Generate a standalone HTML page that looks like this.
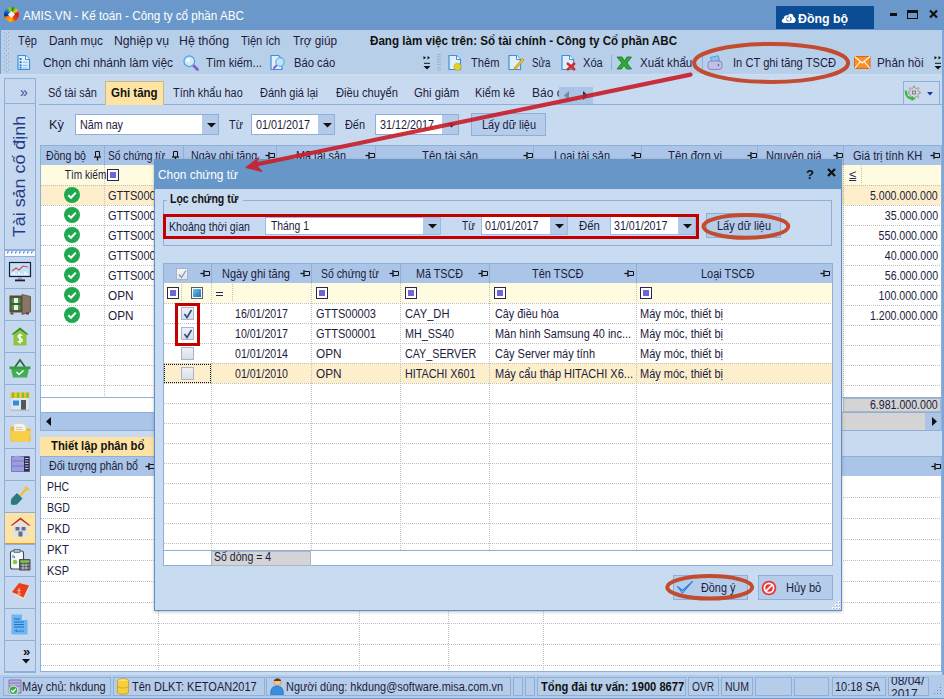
<!DOCTYPE html>
<html><head><meta charset="utf-8">
<style>
*{margin:0;padding:0;box-sizing:border-box}
html,body{width:944px;height:699px;overflow:hidden;background:#c8daf0}
body{position:relative;font-family:"Liberation Sans",sans-serif;font-size:12px;color:#1c1c3c}
.a{position:absolute}
.t{position:absolute;white-space:nowrap}
svg{position:absolute;overflow:visible}
</style></head><body>
<div class="a" style="left:0px;top:0px;width:944px;height:30px;background:#6a98ca;"></div>
<div class="a" style="left:3.5px;top:7.3px;width:15px;height:15px;border-radius:50%;background:conic-gradient(from 10deg,#1f8a1f 0deg,#d8e020 40deg,#e81010 70deg,#e83a10 130deg,#ffb020 175deg,#ff8a10 215deg,#f07010 235deg,#002a90 250deg,#1a7ad8 300deg,#a8d818 335deg,#1f8a1f 360deg)"></div>
<div class="a" style="left:8.5px;top:12.3px;width:5px;height:5px;background:#f4f4f8;transform:rotate(45deg)"></div>
<div class="t" style="transform:scaleX(0.9745);transform-origin:left;top:9.84px;font-size:12px;line-height:12px;left:23px;color:#fff;">AMIS.VN - Kế toán - Công ty cổ phần ABC</div>
<div class="a" style="left:776px;top:6px;width:98px;height:23px;background:#0b4c95;"></div>
<svg style="left:781px;top:13px" width="15" height="10" viewBox="0 0 15 10"><path d="M3 10 C0.2 10 0 6.2 2.6 5.8 C2.6 3 5 1.5 7.2 2.4 C8.2 -0.2 12.6 0.3 12.4 3.8 C15.3 4.4 15.5 10 12.2 10 Z" fill="#fff"/><circle cx="7.8" cy="6" r="2.3" fill="none" stroke="#0b4c95" stroke-width="1" stroke-dasharray="2.4 1.2"/></svg>
<div class="t" style="transform:scaleX(0.9864);transform-origin:left;top:12.72px;font-size:12.5px;line-height:12.5px;left:798px;font-weight:bold;color:#fff;">Đồng bộ</div>
<div class="a" style="left:890px;top:13px;width:7px;height:3px;background:#111;"></div>
<div class="a" style="left:907px;top:10px;width:11px;height:9px;border:1px solid #111;border-top-width:3px;"></div>
<svg style="left:929px;top:10px" width="9" height="8" viewBox="0 0 9 8"><path d="M1 0.5 L8 7.5 M8 0.5 L1 7.5" stroke="#111" stroke-width="2.2"/></svg>
<div class="a" style="left:0px;top:30px;width:944px;height:44px;background:#b8cfea;"></div>
<div class="a" style="left:0px;top:29px;width:1px;height:646px;background:#6f9bcd;"></div>
<svg style="left:4px;top:32px" width="5" height="19" fill="#a0a8b8"><rect x="0" y="0" width="1" height="1"/><rect x="4" y="0" width="1" height="1"/><rect x="2" y="2" width="1" height="1"/><rect x="0" y="4" width="1" height="1"/><rect x="4" y="4" width="1" height="1"/><rect x="2" y="6" width="1" height="1"/><rect x="0" y="8" width="1" height="1"/><rect x="4" y="8" width="1" height="1"/><rect x="2" y="10" width="1" height="1"/><rect x="0" y="12" width="1" height="1"/><rect x="4" y="12" width="1" height="1"/><rect x="2" y="14" width="1" height="1"/><rect x="0" y="16" width="1" height="1"/><rect x="4" y="16" width="1" height="1"/><rect x="2" y="18" width="1" height="1"/></svg>
<svg style="left:4px;top:53px" width="5" height="19" fill="#a0a8b8"><rect x="0" y="0" width="1" height="1"/><rect x="4" y="0" width="1" height="1"/><rect x="2" y="2" width="1" height="1"/><rect x="0" y="4" width="1" height="1"/><rect x="4" y="4" width="1" height="1"/><rect x="2" y="6" width="1" height="1"/><rect x="0" y="8" width="1" height="1"/><rect x="4" y="8" width="1" height="1"/><rect x="2" y="10" width="1" height="1"/><rect x="0" y="12" width="1" height="1"/><rect x="4" y="12" width="1" height="1"/><rect x="2" y="14" width="1" height="1"/><rect x="0" y="16" width="1" height="1"/><rect x="4" y="16" width="1" height="1"/><rect x="2" y="18" width="1" height="1"/></svg>
<div class="t" style="transform:scaleX(0.9184);transform-origin:left;top:35.14px;font-size:12px;line-height:12px;left:18px;">Tệp</div>
<div class="t" style="transform:scaleX(0.9871);transform-origin:left;top:35.14px;font-size:12px;line-height:12px;left:49px;">Danh mục</div>
<div class="t" style="transform:scaleX(1.0176);transform-origin:left;top:35.14px;font-size:12px;line-height:12px;left:114px;">Nghiệp vụ</div>
<div class="t" style="transform:scaleX(1.0266);transform-origin:left;top:35.14px;font-size:12px;line-height:12px;left:179px;">Hệ thống</div>
<div class="t" style="transform:scaleX(0.9302);transform-origin:left;top:35.14px;font-size:12px;line-height:12px;left:240.7px;">Tiện ích</div>
<div class="t" style="transform:scaleX(0.9826);transform-origin:left;top:35.14px;font-size:12px;line-height:12px;left:293px;">Trợ giúp</div>
<div class="t" style="transform:scaleX(0.9667);transform-origin:left;top:35.14px;font-size:12px;line-height:12px;left:369.8px;font-weight:bold;color:#111;">Đang làm việc trên: Sổ tài chính - Công ty Cổ phần ABC</div>
<div class="t" style="transform:scaleX(0.9892);transform-origin:left;top:57.24px;font-size:12px;line-height:12px;left:42.5px;">Chọn chi nhánh làm việc</div>
<div class="t" style="transform:scaleX(0.9437);transform-origin:left;top:57.24px;font-size:12px;line-height:12px;left:206px;">Tìm kiếm...</div>
<div class="t" style="transform:scaleX(0.9354);transform-origin:left;top:57.24px;font-size:12px;line-height:12px;left:294.3px;">Báo cáo</div>
<div class="t" style="transform:scaleX(0.9255);transform-origin:left;top:57.24px;font-size:12px;line-height:12px;left:470.8px;">Thêm</div>
<div class="t" style="transform:scaleX(0.8055);transform-origin:left;top:57.24px;font-size:12px;line-height:12px;left:531.7px;">Sửa</div>
<div class="t" style="transform:scaleX(0.9270);transform-origin:left;top:57.24px;font-size:12px;line-height:12px;left:582.7px;">Xóa</div>
<div class="t" style="transform:scaleX(0.9677);transform-origin:left;top:57.24px;font-size:12px;line-height:12px;left:639.7px;">Xuất khẩu</div>
<div class="t" style="transform:scaleX(0.9283);transform-origin:left;top:57.24px;font-size:12px;line-height:12px;left:733px;">In CT ghi tăng TSCĐ</div>
<div class="t" style="transform:scaleX(0.9815);transform-origin:left;top:57.24px;font-size:12px;line-height:12px;left:877px;">Phản hồi</div>
<div class="a" style="left:0px;top:74px;width:944px;height:602px;background:#c8daf0;"></div>
<div class="a" style="left:0px;top:74px;width:944px;height:1px;background:#cfdef2;"></div>
<div class="a" style="left:4px;top:78px;width:32px;height:594px;background:#c6d8ef;border:1px solid #8eb0d8;"></div>
<div class="a" style="left:4px;top:103px;width:32px;height:1px;background:#8eb0d8;"></div>
<div class="t" style="left:20px;top:85px;font-size:14px;line-height:14px;color:#2c4f8c">»</div>
<div class="a" style="left:4px;top:249px;width:32px;height:1px;background:#8eb0d8;"></div>
<div class="a" style="left:5px;top:249px;width:30px;height:2px;background:#8eb0d8;"></div>
<svg style="left:5px;top:251px" width="30" height="5"><rect width="30" height="5" fill="#f6f9fd"/><path d="M2 0.5 H4.5 L2 3Z" fill="#5f92d6"/><path d="M6 0.5 H8.5 L6 3Z" fill="#5f92d6"/><path d="M10 0.5 H12.5 L10 3Z" fill="#5f92d6"/><path d="M14 0.5 H16.5 L14 3Z" fill="#5f92d6"/><path d="M18 0.5 H20.5 L18 3Z" fill="#5f92d6"/><path d="M22 0.5 H24.5 L22 3Z" fill="#5f92d6"/><path d="M26 0.5 H28.5 L26 3Z" fill="#5f92d6"/></svg>
<div class="a" style="left:4px;top:256px;width:32px;height:1px;background:#8eb0d8;"></div>
<div class="a" style="left:4px;top:288px;width:32px;height:1px;background:#8eb0d8;"></div>
<div class="a" style="left:4px;top:320px;width:32px;height:1px;background:#8eb0d8;"></div>
<div class="a" style="left:4px;top:352px;width:32px;height:1px;background:#8eb0d8;"></div>
<div class="a" style="left:4px;top:384px;width:32px;height:1px;background:#8eb0d8;"></div>
<div class="a" style="left:4px;top:416px;width:32px;height:1px;background:#8eb0d8;"></div>
<div class="a" style="left:4px;top:448px;width:32px;height:1px;background:#8eb0d8;"></div>
<div class="a" style="left:4px;top:480px;width:32px;height:1px;background:#8eb0d8;"></div>
<div class="a" style="left:4px;top:512px;width:32px;height:1px;background:#8eb0d8;"></div>
<div class="a" style="left:4px;top:544px;width:32px;height:1px;background:#8eb0d8;"></div>
<div class="a" style="left:4px;top:576px;width:32px;height:1px;background:#8eb0d8;"></div>
<div class="a" style="left:4px;top:608px;width:32px;height:1px;background:#8eb0d8;"></div>
<div class="a" style="left:4px;top:640px;width:32px;height:1px;background:#8eb0d8;"></div>
<div class="a" style="left:4px;top:672px;width:32px;height:1px;background:#8eb0d8;"></div>
<div class="a" style="left:5px;top:513px;width:30px;height:31px;background:#fde4a4;"></div>
<div class="t" style="left:-38.1px;top:167.75px;width:115.4px;height:17px;font-size:17px;line-height:17px;color:#1f3d85;text-align:center;transform:rotate(-90deg) scaleX(1.053);transform-origin:center">Tài sản cố định</div>
<div class="a" style="left:39px;top:104px;width:905px;height:1px;background:#8eb0d8;"></div>
<div class="a" style="left:105px;top:81px;width:59px;height:24px;background:#fde4a4;border:1px solid #c9b98a;border-bottom:none;"></div>
<div class="t" style="transform:scaleX(0.9180);transform-origin:left;top:86.54px;font-size:12px;line-height:12px;left:48px;">Sổ tài sản</div>
<div class="t" style="transform:scaleX(0.9574);transform-origin:left;top:86.54px;font-size:12px;line-height:12px;left:111.4px;font-weight:bold;color:#111;">Ghi tăng</div>
<div class="t" style="transform:scaleX(0.9083);transform-origin:left;top:86.54px;font-size:12px;line-height:12px;left:173.2px;">Tính khẩu hao</div>
<div class="t" style="transform:scaleX(0.9152);transform-origin:left;top:86.54px;font-size:12px;line-height:12px;left:260.2px;">Đánh giá lại</div>
<div class="t" style="transform:scaleX(0.9278);transform-origin:left;top:86.54px;font-size:12px;line-height:12px;left:335.9px;">Điều chuyển</div>
<div class="t" style="transform:scaleX(0.9411);transform-origin:left;top:86.54px;font-size:12px;line-height:12px;left:413.7px;">Ghi giảm</div>
<div class="t" style="transform:scaleX(0.9179);transform-origin:left;top:86.54px;font-size:12px;line-height:12px;left:475px;">Kiểm kê</div>
<div class="a" style="left:532px;top:86px;width:28px;height:14px;overflow:hidden"><div class="t" style="left:0;top:0.5px;font-size:12px;line-height:12px;">Báo cáo</div></div>
<div class="a" style="left:559px;top:87px;width:34px;height:17px;background:#a9c4e4;"></div>
<svg style="left:564px;top:91px" width="25" height="9"><path d="M5 0 L0 4.5 L5 9Z" fill="#7a8797"/><path d="M19 0 L24 4.5 L19 9Z" fill="#1c2f5c"/></svg>
<div class="a" style="left:903px;top:81px;width:37px;height:24px;background:#c9daf0;border:1px solid #8eb0d8;"></div>
<svg style="left:905px;top:85px" width="16" height="16" viewBox="0 0 16 16"><path d="M8.6 1 L9.6 1 L10 3 L11.6 3.7 L13.2 2.5 L14 3.4 L12.8 5 L13.4 6.6 L15.3 7 L15.3 8.2 L13.4 8.6 L12.8 10.2 L14 11.8 L13.2 12.6 L11.6 11.5 L10 12.2 L9.6 14 L8.6 14 L8.2 12.2 L6.6 11.5 L5 12.6 L4.2 11.8 L5.4 10.2 L4.8 8.6 L3 8.2 L3 7 L4.8 6.6 L5.4 5 L4.2 3.4 L5 2.5 L6.6 3.7 L8.2 3Z" fill="#d8d8d8" stroke="#8a8a8a" stroke-width="0.8"/><rect x="7.6" y="6" width="3" height="3" fill="#c9daf0" stroke="#6a6a6a" stroke-width="0.8"/><path d="M0.8 5.5 C0.5 10 3 13.5 7.5 13.8" stroke="#3cb83c" stroke-width="2.2" fill="none"/><path d="M6.5 10.8 L10.5 13.8 L6.5 16Z" fill="#3cb83c"/></svg>
<svg style="left:927px;top:92px" width="6" height="4"><path d="M0 0 L6 0 L3 3.5Z" fill="#123f8c"/></svg>
<div class="t" style="transform:scaleX(1.0702);transform-origin:left;top:118.64px;font-size:12px;line-height:12px;left:49px;">Kỳ</div>
<div class="a" style="left:75px;top:114px;width:144px;height:21px;background:#fff;border:1px solid #8eb0d8;"></div>
<div class="a" style="left:202px;top:115px;width:16px;height:19px;background:#b3cae8;"></div>
<svg style="left:206.5px;top:122.5px" width="9" height="5"><path d="M0 0 L9 0 L4.5 4.5Z" fill="#111"/></svg>
<div class="t" style="transform:scaleX(0.8953);transform-origin:left;top:118.64px;font-size:12px;line-height:12px;left:80px;">Năm nay</div>
<div class="t" style="transform:scaleX(0.9106);transform-origin:left;top:118.64px;font-size:12px;line-height:12px;left:228.5px;">Từ</div>
<div class="a" style="left:251px;top:114px;width:84px;height:21px;background:#fff;border:1px solid #8eb0d8;"></div>
<div class="a" style="left:318px;top:115px;width:16px;height:19px;background:#b3cae8;"></div>
<svg style="left:322.5px;top:122.5px" width="9" height="5"><path d="M0 0 L9 0 L4.5 4.5Z" fill="#111"/></svg>
<div class="t" style="transform:scaleX(0.8991);transform-origin:left;top:118.64px;font-size:12px;line-height:12px;left:255.5px;">01/01/2017</div>
<div class="t" style="transform:scaleX(0.9084);transform-origin:left;top:118.64px;font-size:12px;line-height:12px;left:344.8px;">Đến</div>
<div class="a" style="left:375px;top:114px;width:84px;height:21px;background:#fff;border:1px solid #8eb0d8;"></div>
<div class="a" style="left:442px;top:115px;width:16px;height:19px;background:#b3cae8;"></div>
<svg style="left:446.5px;top:122.5px" width="9" height="5"><path d="M0 0 L9 0 L4.5 4.5Z" fill="#111"/></svg>
<div class="t" style="transform:scaleX(0.8991);transform-origin:left;top:118.64px;font-size:12px;line-height:12px;left:379.5px;">31/12/2017</div>
<div class="a" style="left:471px;top:113px;width:75px;height:23px;background:#b5cdeb;border:1px solid #8eb0d8;"></div>
<div class="t" style="transform:scaleX(0.9090);transform-origin:left;top:118.64px;font-size:12px;line-height:12px;left:482px;">Lấy dữ liệu</div>
<div class="a" style="left:40px;top:145px;width:902px;height:286px;background:#fff;border:1px solid #8eb0d8;"></div>
<div class="a" style="left:41px;top:146px;width:900px;height:19px;background:#aac5e7;"></div>
<div class="a" style="left:104px;top:146px;width:1px;height:19px;background:#8eb0d8;"></div>
<div class="a" style="left:183px;top:146px;width:1px;height:19px;background:#8eb0d8;"></div>
<div class="a" style="left:276px;top:146px;width:1px;height:19px;background:#8eb0d8;"></div>
<div class="a" style="left:375px;top:146px;width:1px;height:19px;background:#8eb0d8;"></div>
<div class="a" style="left:533px;top:146px;width:1px;height:19px;background:#8eb0d8;"></div>
<div class="a" style="left:641px;top:146px;width:1px;height:19px;background:#8eb0d8;"></div>
<div class="a" style="left:757px;top:146px;width:1px;height:19px;background:#8eb0d8;"></div>
<div class="a" style="left:843px;top:146px;width:1px;height:19px;background:#8eb0d8;"></div>
<div class="t" style="transform:scaleX(0.8815);transform-origin:left;top:150.34px;font-size:12px;line-height:12px;left:46.25px;">Đồng bộ</div>
<svg style="left:94px;top:151px" width="8" height="10" viewBox="0 0 8 10"><path d="M1.5 0.5 H5.5 V5.5 M1.5 0.5 V5.5" stroke="#111" stroke-width="1" fill="none"/><path d="M0 6 H7" stroke="#111" stroke-width="1.3"/><path d="M3.5 6 V9.5" stroke="#111" stroke-width="1.3"/></svg>
<div class="t" style="transform:scaleX(0.8535);transform-origin:left;top:150.34px;font-size:12px;line-height:12px;left:108px;">Số chứng từ</div>
<svg style="left:172px;top:151px" width="8" height="10" viewBox="0 0 8 10"><path d="M1.5 0.5 H5.5 V5.5 M1.5 0.5 V5.5" stroke="#111" stroke-width="1" fill="none"/><path d="M0 6 H7" stroke="#111" stroke-width="1.3"/><path d="M3.5 6 V9.5" stroke="#111" stroke-width="1.3"/></svg>
<div class="t" style="transform:scaleX(0.8952);transform-origin:left;top:150.34px;font-size:12px;line-height:12px;left:190.7px;">Ngày ghi tăng</div>
<svg style="left:264.5px;top:151.5px" width="10" height="8" viewBox="0 0 10 8"><path d="M9.5 1.5 V5.5 H4.5 M9.5 1.5 H4.5" stroke="#111" stroke-width="1" fill="none"/><path d="M4 0 V7" stroke="#111" stroke-width="1.3"/><path d="M4 3.5 H0.5" stroke="#111" stroke-width="1.3"/></svg>
<div class="t" style="transform:scaleX(0.9032);transform-origin:left;top:150.34px;font-size:12px;line-height:12px;left:295.5px;">Mã tài sản</div>
<svg style="left:365px;top:151.5px" width="10" height="8" viewBox="0 0 10 8"><path d="M9.5 1.5 V5.5 H4.5 M9.5 1.5 H4.5" stroke="#111" stroke-width="1" fill="none"/><path d="M4 0 V7" stroke="#111" stroke-width="1.3"/><path d="M4 3.5 H0.5" stroke="#111" stroke-width="1.3"/></svg>
<div class="t" style="transform:scaleX(0.9432);transform-origin:left;top:150.34px;font-size:12px;line-height:12px;left:422.25px;">Tên tài sản</div>
<svg style="left:523px;top:151.5px" width="10" height="8" viewBox="0 0 10 8"><path d="M9.5 1.5 V5.5 H4.5 M9.5 1.5 H4.5" stroke="#111" stroke-width="1" fill="none"/><path d="M4 0 V7" stroke="#111" stroke-width="1.3"/><path d="M4 3.5 H0.5" stroke="#111" stroke-width="1.3"/></svg>
<div class="t" style="transform:scaleX(0.9122);transform-origin:left;top:150.34px;font-size:12px;line-height:12px;left:554px;">Loại tài sản</div>
<svg style="left:631px;top:151.5px" width="10" height="8" viewBox="0 0 10 8"><path d="M9.5 1.5 V5.5 H4.5 M9.5 1.5 H4.5" stroke="#111" stroke-width="1" fill="none"/><path d="M4 0 V7" stroke="#111" stroke-width="1.3"/><path d="M4 3.5 H0.5" stroke="#111" stroke-width="1.3"/></svg>
<div class="t" style="transform:scaleX(0.9435);transform-origin:left;top:150.34px;font-size:12px;line-height:12px;left:668px;">Tên đơn vị</div>
<svg style="left:747px;top:151.5px" width="10" height="8" viewBox="0 0 10 8"><path d="M9.5 1.5 V5.5 H4.5 M9.5 1.5 H4.5" stroke="#111" stroke-width="1" fill="none"/><path d="M4 0 V7" stroke="#111" stroke-width="1.3"/><path d="M4 3.5 H0.5" stroke="#111" stroke-width="1.3"/></svg>
<div class="t" style="transform:scaleX(0.9182);transform-origin:left;top:150.34px;font-size:12px;line-height:12px;left:766px;">Nguyên giá</div>
<svg style="left:833px;top:151.5px" width="10" height="8" viewBox="0 0 10 8"><path d="M9.5 1.5 V5.5 H4.5 M9.5 1.5 H4.5" stroke="#111" stroke-width="1" fill="none"/><path d="M4 0 V7" stroke="#111" stroke-width="1.3"/><path d="M4 3.5 H0.5" stroke="#111" stroke-width="1.3"/></svg>
<div class="t" style="transform:scaleX(0.9189);transform-origin:left;top:150.34px;font-size:12px;line-height:12px;left:852.5px;">Giá trị tính KH</div>
<svg style="left:930px;top:151.5px" width="10" height="8" viewBox="0 0 10 8"><path d="M9.5 1.5 V5.5 H4.5 M9.5 1.5 H4.5" stroke="#111" stroke-width="1" fill="none"/><path d="M4 0 V7" stroke="#111" stroke-width="1.3"/><path d="M4 3.5 H0.5" stroke="#111" stroke-width="1.3"/></svg>
<div class="a" style="left:41px;top:165px;width:900px;height:20px;background:#fffbe1;"></div>
<div class="a" style="left:41px;top:185px;width:900px;height:20px;background:#fdefcb;"></div>
<div class="a" style="left:41px;top:185px;width:900px;height:1px;background:repeating-linear-gradient(90deg,#c0c0c0 0 1px,transparent 1px 2px)"></div>
<div class="a" style="left:41px;top:205px;width:900px;height:1px;background:repeating-linear-gradient(90deg,#c0c0c0 0 1px,transparent 1px 2px)"></div>
<div class="a" style="left:41px;top:225px;width:900px;height:1px;background:repeating-linear-gradient(90deg,#c0c0c0 0 1px,transparent 1px 2px)"></div>
<div class="a" style="left:41px;top:245px;width:900px;height:1px;background:repeating-linear-gradient(90deg,#c0c0c0 0 1px,transparent 1px 2px)"></div>
<div class="a" style="left:41px;top:265px;width:900px;height:1px;background:repeating-linear-gradient(90deg,#c0c0c0 0 1px,transparent 1px 2px)"></div>
<div class="a" style="left:41px;top:285px;width:900px;height:1px;background:repeating-linear-gradient(90deg,#c0c0c0 0 1px,transparent 1px 2px)"></div>
<div class="a" style="left:41px;top:305px;width:900px;height:1px;background:repeating-linear-gradient(90deg,#c0c0c0 0 1px,transparent 1px 2px)"></div>
<div class="a" style="left:41px;top:325px;width:900px;height:1px;background:repeating-linear-gradient(90deg,#c0c0c0 0 1px,transparent 1px 2px)"></div>
<div class="a" style="left:41px;top:345px;width:900px;height:1px;background:repeating-linear-gradient(90deg,#c0c0c0 0 1px,transparent 1px 2px)"></div>
<div class="a" style="left:41px;top:365px;width:900px;height:1px;background:repeating-linear-gradient(90deg,#c0c0c0 0 1px,transparent 1px 2px)"></div>
<div class="a" style="left:41px;top:385px;width:900px;height:1px;background:repeating-linear-gradient(90deg,#c0c0c0 0 1px,transparent 1px 2px)"></div>
<div class="a" style="left:104px;top:165px;width:1px;height:232px;background:repeating-linear-gradient(180deg,#c0c0c0 0 1px,transparent 1px 2px)"></div>
<div class="a" style="left:183px;top:165px;width:1px;height:232px;background:repeating-linear-gradient(180deg,#c0c0c0 0 1px,transparent 1px 2px)"></div>
<div class="a" style="left:276px;top:165px;width:1px;height:232px;background:repeating-linear-gradient(180deg,#c0c0c0 0 1px,transparent 1px 2px)"></div>
<div class="a" style="left:375px;top:165px;width:1px;height:232px;background:repeating-linear-gradient(180deg,#c0c0c0 0 1px,transparent 1px 2px)"></div>
<div class="a" style="left:533px;top:165px;width:1px;height:232px;background:repeating-linear-gradient(180deg,#c0c0c0 0 1px,transparent 1px 2px)"></div>
<div class="a" style="left:641px;top:165px;width:1px;height:232px;background:repeating-linear-gradient(180deg,#c0c0c0 0 1px,transparent 1px 2px)"></div>
<div class="a" style="left:757px;top:165px;width:1px;height:232px;background:repeating-linear-gradient(180deg,#c0c0c0 0 1px,transparent 1px 2px)"></div>
<div class="a" style="left:843px;top:165px;width:1px;height:232px;background:repeating-linear-gradient(180deg,#c0c0c0 0 1px,transparent 1px 2px)"></div>
<div class="a" style="left:861px;top:166px;width:1px;height:18px;background:repeating-linear-gradient(180deg,#c0c0c0 0 1px,transparent 1px 2px)"></div>
<div class="t" style="transform:scaleX(0.8410);transform-origin:right;top:169.34px;font-size:12px;line-height:12px;right:838px;">Tìm kiếm</div>
<div class="a" style="left:107px;top:169px;width:12px;height:12px;border:1px solid #26265c;background:#fff"><div class="a" style="left:2px;top:2px;width:6px;height:6px;background:#6e66d8"></div></div>
<div class="t" style="left:849px;top:168px;font-size:13px;line-height:14px;text-decoration:underline;color:#26265c">≤</div>
<svg style="left:64px;top:187px" width="16" height="16" viewBox="0 0 16 16"><circle cx="8" cy="8" r="8" fill="#1ea94e"/><path d="M4.3 8.2 L7 10.8 L11.8 5.6" stroke="#fff" stroke-width="2" fill="none"/></svg>
<div class="t" style="transform:scaleX(0.9178);transform-origin:left;top:189.84px;font-size:12px;line-height:12px;left:108px;">GTTS00003</div>
<div class="t" style="transform:scaleX(0.8834);transform-origin:right;top:189.84px;font-size:12px;line-height:12px;right:6px;">5.000.000.000</div>
<svg style="left:64px;top:207px" width="16" height="16" viewBox="0 0 16 16"><circle cx="8" cy="8" r="8" fill="#1ea94e"/><path d="M4.3 8.2 L7 10.8 L11.8 5.6" stroke="#fff" stroke-width="2" fill="none"/></svg>
<div class="t" style="transform:scaleX(0.9178);transform-origin:left;top:209.84px;font-size:12px;line-height:12px;left:108px;">GTTS00001</div>
<div class="t" style="transform:scaleX(0.8857);transform-origin:right;top:209.84px;font-size:12px;line-height:12px;right:6px;">35.000.000</div>
<svg style="left:64px;top:227px" width="16" height="16" viewBox="0 0 16 16"><circle cx="8" cy="8" r="8" fill="#1ea94e"/><path d="M4.3 8.2 L7 10.8 L11.8 5.6" stroke="#fff" stroke-width="2" fill="none"/></svg>
<div class="t" style="transform:scaleX(0.9178);transform-origin:left;top:229.84px;font-size:12px;line-height:12px;left:108px;">GTTS00002</div>
<div class="t" style="transform:scaleX(0.8871);transform-origin:right;top:229.84px;font-size:12px;line-height:12px;right:6px;">550.000.000</div>
<svg style="left:64px;top:247px" width="16" height="16" viewBox="0 0 16 16"><circle cx="8" cy="8" r="8" fill="#1ea94e"/><path d="M4.3 8.2 L7 10.8 L11.8 5.6" stroke="#fff" stroke-width="2" fill="none"/></svg>
<div class="t" style="transform:scaleX(0.9178);transform-origin:left;top:249.84px;font-size:12px;line-height:12px;left:108px;">GTTS00004</div>
<div class="t" style="transform:scaleX(0.8857);transform-origin:right;top:249.84px;font-size:12px;line-height:12px;right:6px;">40.000.000</div>
<svg style="left:64px;top:267px" width="16" height="16" viewBox="0 0 16 16"><circle cx="8" cy="8" r="8" fill="#1ea94e"/><path d="M4.3 8.2 L7 10.8 L11.8 5.6" stroke="#fff" stroke-width="2" fill="none"/></svg>
<div class="t" style="transform:scaleX(0.9178);transform-origin:left;top:269.84px;font-size:12px;line-height:12px;left:108px;">GTTS00005</div>
<div class="t" style="transform:scaleX(0.8857);transform-origin:right;top:269.84px;font-size:12px;line-height:12px;right:6px;">56.000.000</div>
<svg style="left:64px;top:287px" width="16" height="16" viewBox="0 0 16 16"><circle cx="8" cy="8" r="8" fill="#1ea94e"/><path d="M4.3 8.2 L7 10.8 L11.8 5.6" stroke="#fff" stroke-width="2" fill="none"/></svg>
<div class="t" style="transform:scaleX(0.9802);transform-origin:left;top:289.84px;font-size:12px;line-height:12px;left:108px;">OPN</div>
<div class="t" style="transform:scaleX(0.8871);transform-origin:right;top:289.84px;font-size:12px;line-height:12px;right:6px;">100.000.000</div>
<svg style="left:64px;top:307px" width="16" height="16" viewBox="0 0 16 16"><circle cx="8" cy="8" r="8" fill="#1ea94e"/><path d="M4.3 8.2 L7 10.8 L11.8 5.6" stroke="#fff" stroke-width="2" fill="none"/></svg>
<div class="t" style="transform:scaleX(0.9802);transform-origin:left;top:309.84px;font-size:12px;line-height:12px;left:108px;">OPN</div>
<div class="t" style="transform:scaleX(0.8834);transform-origin:right;top:309.84px;font-size:12px;line-height:12px;right:6px;">1.200.000.000</div>
<div class="a" style="left:41px;top:397px;width:900px;height:1px;background:#8eb0d8;"></div>
<div class="a" style="left:843px;top:398px;width:98px;height:14px;background:#d4d4d4;border:1px solid #a8b8cc;"></div>
<div class="t" style="transform:scaleX(0.8834);transform-origin:right;top:399.34px;font-size:12px;line-height:12px;right:6px;">6.981.000.000</div>
<div class="a" style="left:41px;top:412px;width:900px;height:18px;background:#d4d4d4;"></div>
<div class="a" style="left:41px;top:412px;width:114px;height:18px;background:#aac5e7;"></div>
<div class="a" style="left:41px;top:412px;width:900px;height:1px;background:#8eb0d8;"></div>
<svg style="left:46px;top:417px" width="5" height="9"><path d="M5 0 L0 4.5 L5 9Z" fill="#111"/></svg>
<div class="a" style="left:925px;top:413px;width:16px;height:17px;background:#aac5e7;"></div>
<svg style="left:932px;top:417px" width="5" height="9"><path d="M0 0 L5 4.5 L0 9Z" fill="#111"/></svg>
<div class="a" style="left:40px;top:437px;width:118px;height:19px;background:#fde4a4;"></div>
<div class="t" style="transform:scaleX(0.9403);transform-origin:left;top:440.14px;font-size:12px;line-height:12px;left:50.8px;font-weight:bold;color:#111;">Thiết lập phân bổ</div>
<div class="a" style="left:40px;top:456px;width:902px;height:216px;background:#fff;border:1px solid #8eb0d8;"></div>
<div class="a" style="left:41px;top:457px;width:900px;height:19px;background:#aac5e7;"></div>
<div class="t" style="transform:scaleX(0.8843);transform-origin:left;top:460.34px;font-size:12px;line-height:12px;left:49px;">Đối tượng phân bổ</div>
<svg style="left:145px;top:463px" width="10" height="8" viewBox="0 0 10 8"><path d="M9.5 1.5 V5.5 H4.5 M9.5 1.5 H4.5" stroke="#111" stroke-width="1" fill="none"/><path d="M4 0 V7" stroke="#111" stroke-width="1.3"/><path d="M4 3.5 H0.5" stroke="#111" stroke-width="1.3"/></svg>
<svg style="left:931px;top:462.5px" width="10" height="8" viewBox="0 0 10 8"><path d="M9.5 1.5 V5.5 H4.5 M9.5 1.5 H4.5" stroke="#111" stroke-width="1" fill="none"/><path d="M4 0 V7" stroke="#111" stroke-width="1.3"/><path d="M4 3.5 H0.5" stroke="#111" stroke-width="1.3"/></svg>
<div class="a" style="left:41px;top:497px;width:900px;height:1px;background:repeating-linear-gradient(90deg,#c0c0c0 0 1px,transparent 1px 2px)"></div>
<div class="a" style="left:41px;top:518px;width:900px;height:1px;background:repeating-linear-gradient(90deg,#c0c0c0 0 1px,transparent 1px 2px)"></div>
<div class="a" style="left:41px;top:539px;width:900px;height:1px;background:repeating-linear-gradient(90deg,#c0c0c0 0 1px,transparent 1px 2px)"></div>
<div class="a" style="left:41px;top:560px;width:900px;height:1px;background:repeating-linear-gradient(90deg,#c0c0c0 0 1px,transparent 1px 2px)"></div>
<div class="a" style="left:41px;top:581px;width:900px;height:1px;background:repeating-linear-gradient(90deg,#c0c0c0 0 1px,transparent 1px 2px)"></div>
<div class="a" style="left:41px;top:602px;width:900px;height:1px;background:repeating-linear-gradient(90deg,#c0c0c0 0 1px,transparent 1px 2px)"></div>
<div class="a" style="left:41px;top:623px;width:900px;height:1px;background:repeating-linear-gradient(90deg,#c0c0c0 0 1px,transparent 1px 2px)"></div>
<div class="a" style="left:41px;top:644px;width:900px;height:1px;background:repeating-linear-gradient(90deg,#c0c0c0 0 1px,transparent 1px 2px)"></div>
<div class="a" style="left:41px;top:665px;width:900px;height:1px;background:repeating-linear-gradient(90deg,#c0c0c0 0 1px,transparent 1px 2px)"></div>
<div class="a" style="left:158px;top:477px;width:1px;height:194px;background:repeating-linear-gradient(180deg,#c0c0c0 0 1px,transparent 1px 2px)"></div>
<div class="a" style="left:359px;top:477px;width:1px;height:194px;background:repeating-linear-gradient(180deg,#c0c0c0 0 1px,transparent 1px 2px)"></div>
<div class="a" style="left:448px;top:477px;width:1px;height:194px;background:repeating-linear-gradient(180deg,#c0c0c0 0 1px,transparent 1px 2px)"></div>
<div class="a" style="left:543px;top:477px;width:1px;height:194px;background:repeating-linear-gradient(180deg,#c0c0c0 0 1px,transparent 1px 2px)"></div>
<div class="t" style="transform:scaleX(0.8681);transform-origin:left;top:480.54px;font-size:12px;line-height:12px;left:46.5px;">PHC</div>
<div class="t" style="transform:scaleX(0.8841);transform-origin:left;top:501.64px;font-size:12px;line-height:12px;left:46.5px;">BGD</div>
<div class="t" style="transform:scaleX(0.9316);transform-origin:left;top:522.74px;font-size:12px;line-height:12px;left:46.5px;">PKD</div>
<div class="t" style="transform:scaleX(0.9424);transform-origin:left;top:543.84px;font-size:12px;line-height:12px;left:46.5px;">PKT</div>
<div class="t" style="transform:scaleX(0.9161);transform-origin:left;top:564.94px;font-size:12px;line-height:12px;left:46.5px;">KSP</div>
<div class="a" style="left:154px;top:159px;width:688px;height:452px;background:#c9dbf0;border:1px solid #5b8fcf;box-shadow:0 1px 3px rgba(90,70,50,.35);"></div>
<div class="a" style="left:154px;top:159px;width:688px;height:30px;background:#6797c9;"></div>
<div class="t" style="transform:scaleX(0.9506);transform-origin:left;top:169.42px;font-size:12.5px;line-height:12.5px;left:158px;color:#fff;">Chọn chứng từ</div>
<div class="t" style="transform:scaleX(1.0059);transform-origin:left;top:168.00px;font-size:13px;line-height:13px;left:806px;font-weight:bold;color:#111;">?</div>
<svg style="left:827px;top:168px" width="9" height="9" viewBox="0 0 9 9"><path d="M1 1 L8 8 M8 1 L1 8" stroke="#111" stroke-width="2.3"/></svg>
<div class="a" style="left:163px;top:200px;width:669px;height:46px;border:1px solid #8eb0d8;"></div>
<div class="a" style="left:167px;top:194px;width:76px;height:12px;background:#c9dbf0;"></div>
<div class="t" style="transform:scaleX(0.8751);transform-origin:left;top:192.54px;font-size:12px;line-height:12px;left:169.9px;font-weight:bold;color:#111;">Lọc chứng từ</div>
<div class="a" style="left:166px;top:217px;width:530px;height:19px;background:#c7daf1;"></div>
<div class="t" style="transform:scaleX(0.8874);transform-origin:left;top:221.14px;font-size:12px;line-height:12px;left:169.3px;">Khoảng thời gian</div>
<div class="a" style="left:265px;top:217px;width:176px;height:18px;background:#fff;border:1px solid #9dbbe0;"></div>
<div class="a" style="left:423px;top:218px;width:17px;height:16px;background:#b3cae8;"></div>
<svg style="left:428.0px;top:224.0px" width="9" height="5"><path d="M0 0 L9 0 L4.5 4.5Z" fill="#111"/></svg>
<div class="t" style="transform:scaleX(0.8627);transform-origin:left;top:220.34px;font-size:12px;line-height:12px;left:271px;">Tháng 1</div>
<div class="t" style="transform:scaleX(0.8455);transform-origin:left;top:220.04px;font-size:12px;line-height:12px;left:462.2px;">Từ</div>
<div class="a" style="left:481px;top:216px;width:87px;height:19px;background:#fff;border:1px solid #9dbbe0;"></div>
<div class="a" style="left:550px;top:217px;width:17px;height:17px;background:#b3cae8;"></div>
<svg style="left:555.0px;top:223.5px" width="9" height="5"><path d="M0 0 L9 0 L4.5 4.5Z" fill="#111"/></svg>
<div class="t" style="transform:scaleX(0.8907);transform-origin:left;top:219.84px;font-size:12px;line-height:12px;left:485px;">01/01/2017</div>
<div class="t" style="transform:scaleX(0.9448);transform-origin:left;top:220.04px;font-size:12px;line-height:12px;left:579.4px;">Đến</div>
<div class="a" style="left:610px;top:216px;width:86px;height:19px;background:#fff;border:1px solid #9dbbe0;"></div>
<div class="a" style="left:678px;top:217px;width:17px;height:17px;background:#b3cae8;"></div>
<svg style="left:683.0px;top:223.5px" width="9" height="5"><path d="M0 0 L9 0 L4.5 4.5Z" fill="#111"/></svg>
<div class="t" style="transform:scaleX(0.8891);transform-origin:left;top:219.84px;font-size:12px;line-height:12px;left:614.4px;">31/01/2017</div>
<div class="a" style="left:163px;top:214px;width:536px;height:25px;border:3px solid #c20000;"></div>
<div class="a" style="left:706px;top:213px;width:75px;height:25px;background:#b5cdeb;border:1px solid #8eb0d8;"></div>
<div class="t" style="transform:scaleX(0.9090);transform-origin:left;top:220.34px;font-size:12px;line-height:12px;left:717px;">Lấy dữ liệu</div>
<div class="a" style="left:163px;top:263px;width:670px;height:303px;background:#fff;border:1px solid #8eb0d8;"></div>
<div class="a" style="left:164px;top:264px;width:668px;height:19px;background:#aac5e7;"></div>
<div class="a" style="left:211px;top:264px;width:1px;height:19px;background:#8eb0d8;"></div>
<div class="a" style="left:311px;top:264px;width:1px;height:19px;background:#8eb0d8;"></div>
<div class="a" style="left:400px;top:264px;width:1px;height:19px;background:#8eb0d8;"></div>
<div class="a" style="left:489px;top:264px;width:1px;height:19px;background:#8eb0d8;"></div>
<div class="a" style="left:636px;top:264px;width:1px;height:19px;background:#8eb0d8;"></div>
<div class="a" style="left:176px;top:268px;width:12px;height:12px;border:1px solid #a8b4c4;background:linear-gradient(#f4f6f9,#dfe4ea)"></div>
<svg style="left:178px;top:270px" width="9" height="9" viewBox="0 0 9 9"><path d="M1 4.5 L3.5 7.5 L8 0.5" stroke="#7f94b6" stroke-width="1.3" fill="none"/></svg>
<svg style="left:200px;top:270px" width="10" height="8" viewBox="0 0 10 8"><path d="M9.5 1.5 V5.5 H4.5 M9.5 1.5 H4.5" stroke="#111" stroke-width="1" fill="none"/><path d="M4 0 V7" stroke="#111" stroke-width="1.3"/><path d="M4 3.5 H0.5" stroke="#111" stroke-width="1.3"/></svg>
<div class="t" style="transform:scaleX(0.9181);transform-origin:left;top:267.64px;font-size:12px;line-height:12px;left:222.3px;">Ngày ghi tăng</div>
<svg style="left:300px;top:270px" width="10" height="8" viewBox="0 0 10 8"><path d="M9.5 1.5 V5.5 H4.5 M9.5 1.5 H4.5" stroke="#111" stroke-width="1" fill="none"/><path d="M4 0 V7" stroke="#111" stroke-width="1.3"/><path d="M4 3.5 H0.5" stroke="#111" stroke-width="1.3"/></svg>
<div class="t" style="transform:scaleX(0.8685);transform-origin:left;top:267.64px;font-size:12px;line-height:12px;left:321.3px;">Số chứng từ</div>
<svg style="left:389px;top:270px" width="10" height="8" viewBox="0 0 10 8"><path d="M9.5 1.5 V5.5 H4.5 M9.5 1.5 H4.5" stroke="#111" stroke-width="1" fill="none"/><path d="M4 0 V7" stroke="#111" stroke-width="1.3"/><path d="M4 3.5 H0.5" stroke="#111" stroke-width="1.3"/></svg>
<div class="t" style="transform:scaleX(0.8960);transform-origin:left;top:267.64px;font-size:12px;line-height:12px;left:416.2px;">Mã TSCĐ</div>
<svg style="left:478px;top:270px" width="10" height="8" viewBox="0 0 10 8"><path d="M9.5 1.5 V5.5 H4.5 M9.5 1.5 H4.5" stroke="#111" stroke-width="1" fill="none"/><path d="M4 0 V7" stroke="#111" stroke-width="1.3"/><path d="M4 3.5 H0.5" stroke="#111" stroke-width="1.3"/></svg>
<div class="t" style="transform:scaleX(0.9120);transform-origin:left;top:267.64px;font-size:12px;line-height:12px;left:531.5px;">Tên TSCĐ</div>
<svg style="left:624px;top:270px" width="10" height="8" viewBox="0 0 10 8"><path d="M9.5 1.5 V5.5 H4.5 M9.5 1.5 H4.5" stroke="#111" stroke-width="1" fill="none"/><path d="M4 0 V7" stroke="#111" stroke-width="1.3"/><path d="M4 3.5 H0.5" stroke="#111" stroke-width="1.3"/></svg>
<div class="t" style="transform:scaleX(0.9131);transform-origin:left;top:267.64px;font-size:12px;line-height:12px;left:701.2px;">Loại TSCĐ</div>
<svg style="left:820px;top:270px" width="10" height="8" viewBox="0 0 10 8"><path d="M9.5 1.5 V5.5 H4.5 M9.5 1.5 H4.5" stroke="#111" stroke-width="1" fill="none"/><path d="M4 0 V7" stroke="#111" stroke-width="1.3"/><path d="M4 3.5 H0.5" stroke="#111" stroke-width="1.3"/></svg>
<div class="a" style="left:164px;top:283px;width:668px;height:20px;background:#fffbe1;"></div>
<div class="a" style="left:164px;top:363px;width:668px;height:20px;background:#fdefcb;"></div>
<div class="a" style="left:164px;top:303px;width:668px;height:1px;background:repeating-linear-gradient(90deg,#c0c0c0 0 1px,transparent 1px 2px)"></div>
<div class="a" style="left:164px;top:323px;width:668px;height:1px;background:repeating-linear-gradient(90deg,#c0c0c0 0 1px,transparent 1px 2px)"></div>
<div class="a" style="left:164px;top:343px;width:668px;height:1px;background:repeating-linear-gradient(90deg,#c0c0c0 0 1px,transparent 1px 2px)"></div>
<div class="a" style="left:164px;top:363px;width:668px;height:1px;background:repeating-linear-gradient(90deg,#c0c0c0 0 1px,transparent 1px 2px)"></div>
<div class="a" style="left:164px;top:383px;width:668px;height:1px;background:repeating-linear-gradient(90deg,#c0c0c0 0 1px,transparent 1px 2px)"></div>
<div class="a" style="left:164px;top:403px;width:668px;height:1px;background:repeating-linear-gradient(90deg,#c0c0c0 0 1px,transparent 1px 2px)"></div>
<div class="a" style="left:164px;top:423px;width:668px;height:1px;background:repeating-linear-gradient(90deg,#c0c0c0 0 1px,transparent 1px 2px)"></div>
<div class="a" style="left:164px;top:443px;width:668px;height:1px;background:repeating-linear-gradient(90deg,#c0c0c0 0 1px,transparent 1px 2px)"></div>
<div class="a" style="left:164px;top:463px;width:668px;height:1px;background:repeating-linear-gradient(90deg,#c0c0c0 0 1px,transparent 1px 2px)"></div>
<div class="a" style="left:164px;top:483px;width:668px;height:1px;background:repeating-linear-gradient(90deg,#c0c0c0 0 1px,transparent 1px 2px)"></div>
<div class="a" style="left:164px;top:503px;width:668px;height:1px;background:repeating-linear-gradient(90deg,#c0c0c0 0 1px,transparent 1px 2px)"></div>
<div class="a" style="left:164px;top:523px;width:668px;height:1px;background:repeating-linear-gradient(90deg,#c0c0c0 0 1px,transparent 1px 2px)"></div>
<div class="a" style="left:164px;top:543px;width:668px;height:1px;background:repeating-linear-gradient(90deg,#c0c0c0 0 1px,transparent 1px 2px)"></div>
<div class="a" style="left:211px;top:283px;width:1px;height:267px;background:repeating-linear-gradient(180deg,#c0c0c0 0 1px,transparent 1px 2px)"></div>
<div class="a" style="left:311px;top:283px;width:1px;height:267px;background:repeating-linear-gradient(180deg,#c0c0c0 0 1px,transparent 1px 2px)"></div>
<div class="a" style="left:400px;top:283px;width:1px;height:267px;background:repeating-linear-gradient(180deg,#c0c0c0 0 1px,transparent 1px 2px)"></div>
<div class="a" style="left:489px;top:283px;width:1px;height:267px;background:repeating-linear-gradient(180deg,#c0c0c0 0 1px,transparent 1px 2px)"></div>
<div class="a" style="left:636px;top:283px;width:1px;height:267px;background:repeating-linear-gradient(180deg,#c0c0c0 0 1px,transparent 1px 2px)"></div>
<div class="a" style="left:181px;top:284px;width:1px;height:18px;background:repeating-linear-gradient(180deg,#c0c0c0 0 1px,transparent 1px 2px)"></div>
<div class="a" style="left:167px;top:287px;width:12px;height:12px;border:1px solid #26265c;background:#fff"><div class="a" style="left:2px;top:2px;width:6px;height:6px;background:#6e66d8"></div></div>
<div class="a" style="left:190.5px;top:287px;width:12px;height:12px;border:1px solid #5a5a6a;background:#fff"><div class="a" style="left:1px;top:1px;width:8px;height:8px;background:linear-gradient(135deg,#6fc3ea,#1a6fb5)"></div></div>
<div class="a" style="left:216px;top:292px;width:7px;height:1.3px;background:#26265c;"></div>
<div class="a" style="left:216px;top:295px;width:7px;height:1.3px;background:#26265c;"></div>
<div class="a" style="left:232px;top:284px;width:1px;height:18px;background:repeating-linear-gradient(180deg,#c0c0c0 0 1px,transparent 1px 2px)"></div>
<div class="a" style="left:316px;top:287px;width:12px;height:12px;border:1px solid #26265c;background:#fff"><div class="a" style="left:2px;top:2px;width:6px;height:6px;background:#6e66d8"></div></div>
<div class="a" style="left:405px;top:287px;width:12px;height:12px;border:1px solid #26265c;background:#fff"><div class="a" style="left:2px;top:2px;width:6px;height:6px;background:#6e66d8"></div></div>
<div class="a" style="left:494px;top:287px;width:12px;height:12px;border:1px solid #26265c;background:#fff"><div class="a" style="left:2px;top:2px;width:6px;height:6px;background:#6e66d8"></div></div>
<div class="a" style="left:640px;top:287px;width:12px;height:12px;border:1px solid #26265c;background:#fff"><div class="a" style="left:2px;top:2px;width:6px;height:6px;background:#6e66d8"></div></div>
<div class="t" style="transform:scaleX(0.8824);transform-origin:left;top:308.34px;font-size:12px;line-height:12px;left:235.3px;">16/01/2017</div>
<div class="t" style="transform:scaleX(0.9178);transform-origin:left;top:308.34px;font-size:12px;line-height:12px;left:315.7px;">GTTS00003</div>
<div class="t" style="transform:scaleX(0.9310);transform-origin:left;top:308.34px;font-size:12px;line-height:12px;left:405px;">CAY_DH</div>
<div class="t" style="transform:scaleX(0.9008);transform-origin:left;top:308.34px;font-size:12px;line-height:12px;left:494.5px;">Cây điều hòa</div>
<div class="t" style="transform:scaleX(0.9151);transform-origin:left;top:308.34px;font-size:12px;line-height:12px;left:640.2px;">Máy móc, thiết bị</div>
<div class="a" style="left:181px;top:307px;width:13px;height:13px;border:1px solid #a9b6c8;background:linear-gradient(#eef1f5,#d9dfe7)"></div>
<svg style="left:183px;top:309px" width="10" height="10" viewBox="0 0 10 10"><path d="M1.5 5 L4 8.5 L8.5 1" stroke="#2d4d8a" stroke-width="1.6" fill="none"/></svg>
<div class="t" style="transform:scaleX(0.8824);transform-origin:left;top:328.34px;font-size:12px;line-height:12px;left:235.3px;">10/01/2017</div>
<div class="t" style="transform:scaleX(0.9178);transform-origin:left;top:328.34px;font-size:12px;line-height:12px;left:315.7px;">GTTS00001</div>
<div class="t" style="transform:scaleX(0.8957);transform-origin:left;top:328.34px;font-size:12px;line-height:12px;left:405px;">MH_SS40</div>
<div class="t" style="transform:scaleX(0.9102);transform-origin:left;top:328.34px;font-size:12px;line-height:12px;left:494.5px;">Màn hình Samsung 40 inc...</div>
<div class="t" style="transform:scaleX(0.9151);transform-origin:left;top:328.34px;font-size:12px;line-height:12px;left:640.2px;">Máy móc, thiết bị</div>
<div class="a" style="left:181px;top:327px;width:13px;height:13px;border:1px solid #a9b6c8;background:linear-gradient(#eef1f5,#d9dfe7)"></div>
<svg style="left:183px;top:329px" width="10" height="10" viewBox="0 0 10 10"><path d="M1.5 5 L4 8.5 L8.5 1" stroke="#2d4d8a" stroke-width="1.6" fill="none"/></svg>
<div class="t" style="transform:scaleX(0.8824);transform-origin:left;top:348.34px;font-size:12px;line-height:12px;left:235.3px;">01/01/2014</div>
<div class="t" style="transform:scaleX(0.9802);transform-origin:left;top:348.34px;font-size:12px;line-height:12px;left:315.7px;">OPN</div>
<div class="t" style="transform:scaleX(0.8945);transform-origin:left;top:348.34px;font-size:12px;line-height:12px;left:405px;">CAY_SERVER</div>
<div class="t" style="transform:scaleX(0.9143);transform-origin:left;top:348.34px;font-size:12px;line-height:12px;left:494.5px;">Cây Server máy tính</div>
<div class="t" style="transform:scaleX(0.9151);transform-origin:left;top:348.34px;font-size:12px;line-height:12px;left:640.2px;">Máy móc, thiết bị</div>
<div class="a" style="left:181px;top:347px;width:13px;height:13px;border:1px solid #a9b6c8;background:linear-gradient(#eef1f5,#d9dfe7)"></div>
<div class="t" style="transform:scaleX(0.8824);transform-origin:left;top:368.34px;font-size:12px;line-height:12px;left:235.3px;">01/01/2010</div>
<div class="t" style="transform:scaleX(0.9802);transform-origin:left;top:368.34px;font-size:12px;line-height:12px;left:315.7px;">OPN</div>
<div class="t" style="transform:scaleX(0.8984);transform-origin:left;top:368.34px;font-size:12px;line-height:12px;left:405px;">HITACHI X601</div>
<div class="t" style="transform:scaleX(0.9169);transform-origin:left;top:368.34px;font-size:12px;line-height:12px;left:494.5px;">Máy cẩu tháp HITACHI X6...</div>
<div class="t" style="transform:scaleX(0.9151);transform-origin:left;top:368.34px;font-size:12px;line-height:12px;left:640.2px;">Máy móc, thiết bị</div>
<div class="a" style="left:181px;top:367px;width:13px;height:13px;border:1px solid #a9b6c8;background:linear-gradient(#eef1f5,#d9dfe7)"></div>
<div class="a" style="left:164px;top:364px;width:47px;height:19px;border:1px dotted #111"></div>
<div class="a" style="left:175px;top:303px;width:25px;height:43px;border:3px solid #c20000;"></div>
<div class="a" style="left:164px;top:550px;width:668px;height:1px;background:#8eb0d8;"></div>
<div class="a" style="left:211px;top:551px;width:100px;height:15px;background:#d4d4d4;border:1px solid #a8b8cc;"></div>
<div class="t" style="transform:scaleX(0.8792);transform-origin:left;top:551.44px;font-size:12px;line-height:12px;left:214.4px;">Số dòng = 4</div>
<div class="a" style="left:673px;top:575px;width:75px;height:25px;background:#b5cdeb;border:1px solid #8eb0d8;"></div>
<svg style="left:677px;top:581px" width="16" height="13" viewBox="0 0 16 13"><path d="M0.5 5.5 L5.5 12 L15.5 0.5 L5.5 9.5Z" fill="#9fd0f5" stroke="#2a7fd8" stroke-width="1.1" stroke-linejoin="round"/></svg>
<div class="t" style="transform:scaleX(0.9045);transform-origin:left;top:582.34px;font-size:12px;line-height:12px;left:701.2px;">Đồng ý</div>
<div class="a" style="left:758px;top:575px;width:75px;height:25px;background:#b5cdeb;border:1px solid #8eb0d8;"></div>
<svg style="left:761px;top:580px" width="16" height="16" viewBox="0 0 16 16"><circle cx="8" cy="8" r="7.3" fill="#e33"/><circle cx="8" cy="8" r="4.6" fill="none" stroke="#fff" stroke-width="1.8"/><path d="M4.8 11.2 L11.2 4.8" stroke="#fff" stroke-width="1.8"/></svg>
<div class="t" style="transform:scaleX(0.9282);transform-origin:left;top:582.34px;font-size:12px;line-height:12px;left:785.9px;">Hủy bỏ</div>
<svg style="left:832px;top:600px" width="9" height="9"><g fill="#fff"><rect x="6" y="1" width="2" height="2"/><rect x="3" y="4" width="2" height="2"/><rect x="6" y="4" width="2" height="2"/><rect x="0" y="7" width="2" height="2"/><rect x="3" y="7" width="2" height="2"/><rect x="6" y="7" width="2" height="2"/></g><g fill="#a9a49a"><rect x="7" y="2" width="1" height="1"/><rect x="4" y="5" width="1" height="1"/><rect x="7" y="5" width="1" height="1"/><rect x="1" y="8" width="1" height="1"/><rect x="4" y="8" width="1" height="1"/><rect x="7" y="8" width="1" height="1"/></g></svg>
<div class="a" style="left:942px;top:30px;width:2px;height:645px;background:#7ea6d6;"></div>
<div class="a" style="left:0px;top:675px;width:944px;height:24px;background:#b3cbea;"></div>
<div class="a" style="left:0px;top:698px;width:944px;height:1px;background:#7a9cc8;"></div>
<div class="a" style="left:3px;top:677px;width:108px;height:19px;background:#b6cdea;border:1px solid #8eb0d8;"></div>
<div class="a" style="left:113px;top:677px;width:152px;height:19px;background:#b6cdea;border:1px solid #8eb0d8;"></div>
<div class="a" style="left:266px;top:677px;width:245px;height:19px;background:#b6cdea;border:1px solid #8eb0d8;"></div>
<div class="a" style="left:513px;top:677px;width:10px;height:19px;background:#b6cdea;border:1px solid #8eb0d8;"></div>
<div class="a" style="left:525px;top:677px;width:10px;height:19px;background:#b6cdea;border:1px solid #8eb0d8;"></div>
<div class="a" style="left:537px;top:677px;width:149px;height:19px;background:#b6cdea;border:1px solid #8eb0d8;"></div>
<div class="a" style="left:688px;top:677px;width:31px;height:19px;background:#b6cdea;border:1px solid #8eb0d8;"></div>
<div class="a" style="left:721px;top:677px;width:32px;height:19px;background:#b6cdea;border:1px solid #8eb0d8;"></div>
<div class="a" style="left:755px;top:677px;width:37px;height:19px;background:#b6cdea;border:1px solid #8eb0d8;"></div>
<div class="a" style="left:794px;top:677px;width:35px;height:19px;background:#b6cdea;border:1px solid #8eb0d8;"></div>
<div class="a" style="left:832px;top:677px;width:54px;height:19px;background:#b6cdea;border:1px solid #8eb0d8;"></div>
<div class="a" style="left:888px;top:677px;width:41px;height:19px;background:#b6cdea;border:1px solid #8eb0d8;"></div>
<div class="t" style="transform:scaleX(0.9148);transform-origin:left;top:680.84px;font-size:12px;line-height:12px;left:22px;">Máy chủ: hkdung</div>
<div class="t" style="transform:scaleX(0.9180);transform-origin:left;top:680.84px;font-size:12px;line-height:12px;left:132px;">Tên DLKT: KETOAN2017</div>
<div class="t" style="transform:scaleX(0.9110);transform-origin:left;top:680.84px;font-size:12px;line-height:12px;left:286px;">Người dùng: hkdung@software.misa.com.vn</div>
<div class="t" style="transform:scaleX(0.9294);transform-origin:left;top:680.84px;font-size:12px;line-height:12px;left:540.8px;font-weight:bold;color:#111;">Tổng đài tư vấn: 1900 8677</div>
<div class="t" style="transform:scaleX(0.8456);transform-origin:left;top:680.84px;font-size:12px;line-height:12px;left:692px;">OVR</div>
<div class="t" style="transform:scaleX(0.8782);transform-origin:left;top:680.84px;font-size:12px;line-height:12px;left:725px;">NUM</div>
<div class="t" style="transform:scaleX(0.9114);transform-origin:left;top:680.84px;font-size:12px;line-height:12px;left:835px;">10:18 SA</div>
<div class="a" style="left:889px;top:677px;width:40px;height:19px;overflow:hidden"><div class="t" style="left:2px;top:-2px;font-size:12px;line-height:13px">08/04/<br>2017</div></div>
<svg style="left:17px;top:55px" width="14" height="15" viewBox="0 0 14 15"><path d="M1 0.5 H8.5 L12.5 4.5 V14.5 H1 Z" fill="#dff0fc" stroke="#3e8fd8" stroke-width="1.2"/><path d="M8.5 0.5 V4.5 H12.5" fill="#fff" stroke="#3e8fd8" stroke-width="1"/><rect x="2.6" y="3" width="2" height="2" fill="#2a78c8"/><rect x="2.6" y="6.2" width="2" height="2" fill="#2a78c8"/><rect x="2.6" y="9.4" width="2" height="2" fill="#2a78c8"/><rect x="2.6" y="12" width="2" height="1.6" fill="#2a78c8"/><path d="M5.8 7.2H10.5M5.8 10.4H10.5M5.8 13H10.5" stroke="#7fb6e8" stroke-width="1"/></svg>
<svg style="left:183px;top:55px" width="16" height="16" viewBox="0 0 16 16"><path d="M10 10 L14.5 14.5" stroke="#8a5ac8" stroke-width="2.8" stroke-linecap="round"/><circle cx="6.3" cy="6.3" r="5.3" fill="#cfeaf8" stroke="#5aa8dc" stroke-width="1.3"/><circle cx="5" cy="5" r="2" fill="#f2fbff"/></svg>
<svg style="left:270px;top:55px" width="16" height="16" viewBox="0 0 16 16"><path d="M1 0.5 H8.5 L12 4 V14.5 H1 Z" fill="#dff0fc" stroke="#3e8fd8" stroke-width="1.2"/><path d="M4 13 L6.5 10.5" stroke="#8a5ac8" stroke-width="2" stroke-linecap="round"/><circle cx="10" cy="7" r="4.2" fill="#bfe3f8" stroke="#5aa8dc" stroke-width="1.1"/></svg>
<svg style="left:423px;top:56px" width="8" height="15" viewBox="0 0 8 15"><path d="M0.5 0 L3 1.8 L0.5 3.6Z M4.5 0 L7 1.8 L4.5 3.6Z" fill="#111"/><path d="M1 7.3 H7" stroke="#111" stroke-width="1"/><path d="M0.5 10 H7.5 L4 13.6Z" fill="#111"/></svg>
<div class="a" style="left:437px;top:53px;width:4px;height:19px;background:radial-gradient(circle,#a6a6b8 0.7px,transparent 0.9px) 0 0/2px 2.6px"></div>
<svg style="left:448px;top:55px" width="15" height="16" viewBox="0 0 15 16"><path d="M1 0.5 H8.5 L12.5 4.5 V14.5 H1 Z" fill="#dff0fc" stroke="#3e8fd8" stroke-width="1.2"/><path d="M8.5 0.5 V4.5 H12.5" fill="#fff" stroke="#3e8fd8" stroke-width="1"/><circle cx="9.5" cy="11.8" r="3.6" fill="#e3d12a" stroke="#a89a12" stroke-width="0.8" stroke-dasharray="1.3 0.9"/></svg>
<svg style="left:508px;top:55px" width="17" height="16" viewBox="0 0 17 16"><path d="M1 0.5 H8.5 L12.5 4.5 V14.5 H1 Z" fill="#dff0fc" stroke="#3e8fd8" stroke-width="1.2"/><path d="M8.5 0.5 V4.5 H12.5" fill="#fff" stroke="#3e8fd8" stroke-width="1"/><path d="M6.5 12.5 L14.5 3.5 L16 5 L8 14 L6 14.5Z" fill="#f3c62b" stroke="#b98b10" stroke-width="0.8"/></svg>
<svg style="left:561px;top:55px" width="16" height="16" viewBox="0 0 16 16"><path d="M1 0.5 H8.5 L12.5 4.5 V14.5 H1 Z" fill="#dff0fc" stroke="#3e8fd8" stroke-width="1.2"/><path d="M8.5 0.5 V4.5 H12.5" fill="#fff" stroke="#3e8fd8" stroke-width="1"/><path d="M6 8 L14 15 M14 8 L6 15" stroke="#d42a2a" stroke-width="2.4"/></svg>
<div class="a" style="left:611px;top:55px;width:1px;height:15px;background:#8fb0d6;"></div>
<svg style="left:616px;top:56px" width="16" height="14" viewBox="0 0 16 14"><path d="M1 1 H6 L8.5 5 L11 1 H15.5 L11 7 L15.5 13 H10.5 L8 9.2 L5.5 13 H1 L5.8 7Z" fill="#2fa83a" stroke="#1a7a24" stroke-width="0.8"/></svg>
<div class="a" style="left:702px;top:55px;width:1px;height:15px;background:#8fb0d6;"></div>
<svg style="left:707px;top:56px" width="16" height="15" viewBox="0 0 16 15"><rect x="4" y="0.5" width="8" height="5" fill="#7ec9f0" stroke="#5a8fc8" stroke-width="0.8" transform="rotate(-12 8 3)"/><rect x="1" y="5" width="14" height="8.5" rx="3" fill="#c4bde8" stroke="#8d84c4" stroke-width="1"/><circle cx="11.5" cy="9" r="0.9" fill="#6b62a8"/></svg>
<svg style="left:854px;top:56px" width="17" height="13" viewBox="0 0 17 13"><rect x="0.5" y="0.5" width="15.5" height="12" fill="#f5902b" stroke="#d96b10" stroke-width="1"/><path d="M0.5 0.5 L8.2 7 L16 0.5 M0.5 12.5 L6 6 M16 12.5 L10.4 6" stroke="#fff" stroke-width="1.1" fill="none"/></svg>
<svg style="left:934px;top:56px" width="8" height="15" viewBox="0 0 8 15"><path d="M0.5 0 L3 1.8 L0.5 3.6Z M4.5 0 L7 1.8 L4.5 3.6Z" fill="#111"/><path d="M1 7.3 H7" stroke="#111" stroke-width="1"/><path d="M0.5 10 H7.5 L4 13.6Z" fill="#111"/></svg>
<svg style="left:9px;top:262px" width="22" height="20" viewBox="0 0 22 20"><rect x="0.5" y="0.5" width="21" height="14" fill="#bfe3fb" stroke="#1d1d3a" stroke-width="1.2"/><path d="M3 9 L7 6 L10 8 L14 4 L19 5" stroke="#e0463a" stroke-width="1.1" fill="none"/><path d="M3 13V11M5 13V10M7 13V11.5M10 13V10M13 13V11M16 13V9.5M18 13V11" stroke="#fff" stroke-width="1.2"/><rect x="9" y="15" width="4" height="2.5" fill="#aaa"/><rect x="6" y="17.5" width="10" height="1.8" fill="#1d1d3a"/></svg>
<svg style="left:9px;top:294px" width="22" height="21" viewBox="0 0 22 21"><rect x="0.5" y="1.5" width="15" height="17" fill="#5c4a3a"/><rect x="2.5" y="4" width="9" height="5" fill="#2e9e4a"/><rect x="5" y="4" width="4" height="5" fill="#e9f5e0"/><rect x="2.5" y="11" width="9" height="5" fill="#2e9e4a"/><rect x="5" y="11" width="4" height="5" fill="#e9f5e0"/><path d="M13 0.5 L21.5 2.5 V18 L13 20.5Z" fill="#8a7565" stroke="#5c4a3a" stroke-width="0.8"/><rect x="1.5" y="18.5" width="3" height="2" fill="#5c4a3a"/><rect x="17" y="18.5" width="3" height="2" fill="#5c4a3a"/></svg>
<svg style="left:11px;top:327px" width="18" height="19" viewBox="0 0 18 19"><path d="M9 0.5 L17.5 7.5 H15.5 V18.5 H2.5 V7.5 H0.5Z" fill="#8cc641"/><path d="M9 0.5 L17.5 7.5 H15.5 L9 2.8 L2.5 7.5 H0.5Z" fill="#2f8a3a"/><path d="M11.3 8.5 C10.5 7.6 7 7.6 7 9.6 C7 11.6 11.3 11 11.3 13.2 C11.3 15.2 7.8 15.2 6.8 14.2 M9 6.5V16.5" stroke="#fff" stroke-width="1.4" fill="none"/></svg>
<svg style="left:9px;top:359px" width="22" height="19" viewBox="0 0 22 19"><path d="M6 8 L11 1 L16 8" stroke="#1f6a35" stroke-width="1.6" fill="none"/><path d="M0.5 7.5 H21.5 V10 H0.5Z" fill="#3a9a4a"/><path d="M2 10 H20 L18 18.5 H4Z" fill="#3fae55"/><path d="M7.5 13 L10 15.5 L14.5 11.5" stroke="#fff" stroke-width="1.6" fill="none"/></svg>
<svg style="left:10px;top:392px" width="20" height="19" viewBox="0 0 20 19"><path d="M0.5 0.5 H19.5 V6 H0.5Z" fill="#f6c22a"/><path d="M3 0.5 V6 M8 0.5V6 M13 0.5V6 M17.5 0.5V6" stroke="#7cc043" stroke-width="2.2"/><rect x="1.5" y="6" width="17" height="12" fill="#e4e7ea"/><rect x="3" y="8.5" width="6" height="5" fill="#2b8ee0"/><rect x="11" y="8" width="5" height="10" fill="#4a5b66"/><rect x="0.5" y="17.5" width="19" height="1.5" fill="#b8bec4"/></svg>
<svg style="left:10px;top:423px" width="21" height="19" viewBox="0 0 21 19"><path d="M0.5 3.5 H7.5 L9 5.5 H20.5 V18.5 H0.5Z" fill="#e9b92b"/><path d="M4 0.5 H13 L16 3.5 V12 H4Z" fill="#f7f3e8" stroke="#d8d2c0" stroke-width="0.6"/><path d="M6 4.5H12M6 6.5H13M6 8.5H13" stroke="#c8c0a8" stroke-width="0.8"/><path d="M0.5 8 H20.5 L19 18.5 H1.5Z" fill="#f7cf4a"/></svg>
<svg style="left:11px;top:454px" width="19" height="20" viewBox="0 0 19 20"><path d="M0.5 2.5 H18.5 V17.5 H0.5Z" fill="#9c9ee0" stroke="#6a6cb8" stroke-width="0.8"/><path d="M0.5 7H13M0.5 12H13" stroke="#7577c6" stroke-width="1"/><rect x="13" y="2.5" width="5.5" height="15" fill="#2d2d4a"/><path d="M14 4.5H17.5M14 7H17.5M14 9.5H17.5M14 12H17.5M14 14.5H17.5" stroke="#bfbfe0" stroke-width="1"/><path d="M6 0.5 L9 2.5 H3Z" fill="#c8c4e8"/></svg>
<svg style="left:10px;top:486px" width="20" height="20" viewBox="0 0 20 20"><path d="M10 10 L17.5 1.5" stroke="#f2c12e" stroke-width="2.4"/><path d="M15 1 L19.5 4" stroke="#f2c12e" stroke-width="2"/><path d="M7 7 L12.5 12.5 L7 18.5 C4 19.5 1 18.5 1 18.5 C1 18.5 0.5 15 1.5 12.5Z" fill="#2d7a7e"/></svg>
<svg style="left:10px;top:517px" width="21" height="20" viewBox="0 0 21 20"><path d="M10.5 0.5 L20.5 8.5 H18.5 L10.5 2.8 L2.5 8.5 H0.5Z" fill="#c0312a"/><path d="M3 8.5 L10.5 3 L18 8.5 V19.5 H3Z" fill="#e3e1dd"/><rect x="5.5" y="10" width="4" height="3.5" fill="#5b6d99"/><rect x="11.5" y="10" width="4" height="3.5" fill="#5b6d99"/><rect x="8.5" y="14.5" width="4" height="5" fill="#5b6d99"/></svg>
<div class="a" style="left:5px;top:543px;width:30px;height:1px;background:#e8942a;"></div>
<svg style="left:10px;top:549px" width="21" height="22" viewBox="0 0 21 22"><rect x="0.5" y="2" width="13" height="18" rx="2" fill="#f4f8fb" stroke="#3b4a5a" stroke-width="1.1"/><rect x="4" y="0.5" width="6" height="3" fill="#aeb8c2" stroke="#3b4a5a" stroke-width="0.6"/><path d="M3 6V9M4.5 7.5V9" stroke="#2b7ac8" stroke-width="1"/><circle cx="5" cy="13" r="2.3" fill="#8cc641"/><rect x="9" y="10" width="11.5" height="11.5" rx="1" fill="#4a4f55"/><rect x="10.3" y="11.2" width="9" height="2.6" fill="#7fc241"/><path d="M10.5 16H19.5M10.5 19H19.5M13 14.5V20.8M16 14.5V20.8" stroke="#c8ccd0" stroke-width="0.9"/></svg>
<svg style="left:11px;top:582px" width="19" height="19" viewBox="0 0 19 19"><path d="M2 12 L8 2.5 L18.5 5.5 L13 17.5Z" fill="#f4ddc2"/><path d="M1 10 L8 1 L18 3.5 L12.5 15.5Z" fill="#e8401e"/><path d="M8 6V11M6.5 8.5H9.5M6 12H10" stroke="#f7c9b4" stroke-width="1"/></svg>
<svg style="left:11px;top:614px" width="17" height="21" viewBox="0 0 17 21"><path d="M0.5 0.5 H11 L16.5 6 V20.5 H0.5Z" fill="#6fb6f0"/><path d="M11 0.5 V6 H16.5" fill="#bfe0fb"/><path d="M3 5H9M3 8H13M3 10.5H13M3 13H13" stroke="#1d6fc8" stroke-width="1.1"/><path d="M4 17.5 C5 14.5 6.5 15 5.5 18 C7 16.5 8 17.8 9 17 C10 16.5 11 17.5 13 17" stroke="#1d6fc8" stroke-width="0.9" fill="none"/></svg>
<div class="t" style="left:23px;top:645px;font-size:13px;line-height:13px;font-weight:bold;color:#111">»</div>
<svg style="left:22px;top:659px" width="8" height="5" viewBox="0 0 8 5"><path d="M0 0 H8 L4 4.5Z" fill="#111"/></svg>
<div class="a" style="left:942px;top:30px;width:2px;height:645px;background:#7ea6d6;"></div>
<svg style="left:8px;top:678px" width="16" height="17" viewBox="0 0 16 17"><path d="M1 2 H13 V15 H1Z" fill="#b9b3de" stroke="#6a64a8" stroke-width="0.8"/><path d="M2 5H12M2 8H12" stroke="#6a64a8" stroke-width="0.8"/><circle cx="5.5" cy="12.3" r="4.3" fill="#37a94a" stroke="#fff" stroke-width="0.8"/><path d="M3.3 12.3 L5 14 L7.8 10.8" stroke="#fff" stroke-width="1.3" fill="none"/></svg>
<svg style="left:117px;top:678px" width="12" height="17" viewBox="0 0 12 17"><ellipse cx="6" cy="3" rx="5.5" ry="2.4" fill="#fbe27a" stroke="#c79b1e" stroke-width="0.8"/><path d="M0.5 3 V14 C0.5 17 11.5 17 11.5 14 V3" fill="#f6cf3a" stroke="#c79b1e" stroke-width="0.8"/><path d="M0.5 8 C0.5 10.6 11.5 10.6 11.5 8" stroke="#c79b1e" stroke-width="0.7" fill="none"/></svg>
<svg style="left:270px;top:677px" width="14" height="18" viewBox="0 0 14 18"><circle cx="7.5" cy="5" r="3.6" fill="#f3c58c" stroke="#c98a40" stroke-width="0.6"/><path d="M3.8 4 C4 0.5 11 0.5 11.2 4" fill="#5a3a1a"/><path d="M0.5 17.5 C0.5 11 3 9 7 9 C11 9 13.5 11 13.5 17.5Z" fill="#3a8ee0" stroke="#1a6ab8" stroke-width="0.6"/></svg>
<div class="a" style="left:930px;top:683px;width:12px;height:13px;background:radial-gradient(circle,#6f8aa8 0.8px,transparent 1px) 0 0/3px 3px;clip-path:polygon(100% 0,100% 100%,0 100%)"></div>
<svg style="left:0;top:0" width="944" height="699" viewBox="0 0 944 699"><ellipse cx="771.1" cy="62.9" rx="77" ry="19" fill="none" stroke="#c24b30" stroke-width="4"/><ellipse cx="745.9" cy="226.4" rx="42.4" ry="11.4" fill="none" stroke="#c24b30" stroke-width="4"/><ellipse cx="709.7" cy="587.3" rx="42.5" ry="11.2" fill="none" stroke="#c24b30" stroke-width="4"/><g opacity="0.92"><path d="M690.5 74.6 L257 164.3" stroke="#c8202c" stroke-width="4.2" stroke-linecap="round"/><path d="M245.8 167.5 L258.8 157.4 L256 164.6 L262 171.5Z" fill="#c8202c" stroke="#c8202c" stroke-width="1" stroke-linejoin="round"/></g></svg>
</body></html>
